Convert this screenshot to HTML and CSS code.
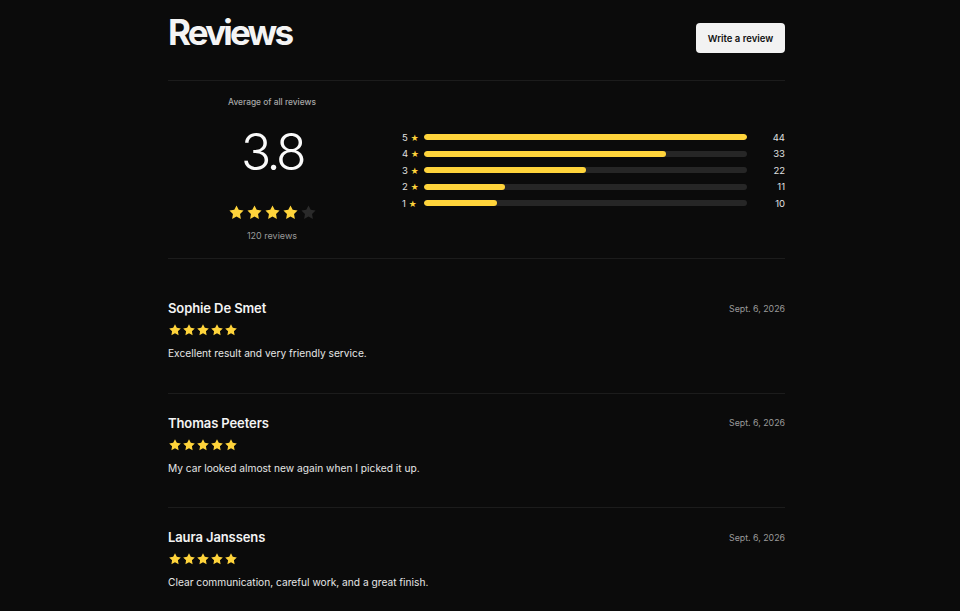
FILE: index.html
```html
<!DOCTYPE html>
<html lang="en">
<head>
<meta charset="utf-8">
<title>Reviews</title>
<link rel="stylesheet" href="styles.css">
</head>
<body>
<svg width="0" height="0" class="defs" aria-hidden="true">
  <defs>
    <path id="star" d="M12 2l3.09 6.26L22 9.27l-5 4.87 1.18 6.88L12 17.77l-6.18 3.25L7 14.14 2 9.27l6.91-1.01L12 2z"/>
  </defs>
</svg>
<main class="page">
  <header class="header">
    <h1 class="title">Reviews</h1>
    <button class="btn">Write a review</button>
  </header>

  <section class="summary">
    <div class="avg">
      <div class="avg-label">Average of all reviews</div>
      <div class="avg-value">3.8</div>
      <div class="stars stars-lg">
        <svg viewBox="0 0 24 24" class="on"><use href="#star"/></svg>
        <svg viewBox="0 0 24 24" class="on"><use href="#star"/></svg>
        <svg viewBox="0 0 24 24" class="on"><use href="#star"/></svg>
        <svg viewBox="0 0 24 24" class="on"><use href="#star"/></svg>
        <svg viewBox="0 0 24 24" class="off"><use href="#star"/></svg>
      </div>
      <div class="avg-count">120 reviews</div>
    </div>
    <div class="bars">
      <div class="bar-row"><span class="bar-label">5 <span class="mini">★</span></span><div class="track"><div class="fill" style="width:100%"></div></div><span class="bar-count">44</span></div>
      <div class="bar-row"><span class="bar-label">4 <span class="mini">★</span></span><div class="track"><div class="fill" style="width:75%"></div></div><span class="bar-count">33</span></div>
      <div class="bar-row"><span class="bar-label">3 <span class="mini">★</span></span><div class="track"><div class="fill" style="width:50%"></div></div><span class="bar-count">22</span></div>
      <div class="bar-row"><span class="bar-label">2 <span class="mini">★</span></span><div class="track"><div class="fill" style="width:25%"></div></div><span class="bar-count">11</span></div>
      <div class="bar-row"><span class="bar-label">1 <span class="mini">★</span></span><div class="track"><div class="fill" style="width:22.7%"></div></div><span class="bar-count">10</span></div>
    </div>
  </section>

  <section class="list">
    <article class="review">
      <div class="review-head">
        <h2 class="name">Sophie De Smet</h2>
        <span class="date">Sept. 6, 2026</span>
      </div>
      <div class="stars stars-sm">
        <svg viewBox="0 0 24 24" class="on"><use href="#star"/></svg>
        <svg viewBox="0 0 24 24" class="on"><use href="#star"/></svg>
        <svg viewBox="0 0 24 24" class="on"><use href="#star"/></svg>
        <svg viewBox="0 0 24 24" class="on"><use href="#star"/></svg>
        <svg viewBox="0 0 24 24" class="on"><use href="#star"/></svg>
      </div>
      <p class="text">Excellent result and very friendly service.</p>
    </article>
    <article class="review">
      <div class="review-head">
        <h2 class="name">Thomas Peeters</h2>
        <span class="date">Sept. 6, 2026</span>
      </div>
      <div class="stars stars-sm">
        <svg viewBox="0 0 24 24" class="on"><use href="#star"/></svg>
        <svg viewBox="0 0 24 24" class="on"><use href="#star"/></svg>
        <svg viewBox="0 0 24 24" class="on"><use href="#star"/></svg>
        <svg viewBox="0 0 24 24" class="on"><use href="#star"/></svg>
        <svg viewBox="0 0 24 24" class="on"><use href="#star"/></svg>
      </div>
      <p class="text">My car looked almost new again when I picked it up.</p>
    </article>
    <article class="review">
      <div class="review-head">
        <h2 class="name">Laura Janssens</h2>
        <span class="date">Sept. 6, 2026</span>
      </div>
      <div class="stars stars-sm">
        <svg viewBox="0 0 24 24" class="on"><use href="#star"/></svg>
        <svg viewBox="0 0 24 24" class="on"><use href="#star"/></svg>
        <svg viewBox="0 0 24 24" class="on"><use href="#star"/></svg>
        <svg viewBox="0 0 24 24" class="on"><use href="#star"/></svg>
        <svg viewBox="0 0 24 24" class="on"><use href="#star"/></svg>
      </div>
      <p class="text">Clear communication, careful work, and a great finish.</p>
    </article>
  </section>
</main>
</body>
</html>
```
FILE: styles.css
```css
* { box-sizing: border-box; }
html, body {
  margin: 0;
  padding: 0;
  background: #0b0b0b;
  color: #f2f2f2;
  font-family: Inter, "Noto Sans", "Liberation Sans", sans-serif;
}
.defs { position: absolute; width: 0; height: 0; }
.page {
  width: 617px;
  margin: 0 0 0 168px;
}
.header {
  display: flex;
  justify-content: space-between;
  align-items: flex-start;
  padding-top: 8px;
  border-bottom: 1px solid #1c1c1c;
  height: 81px;
}
.title {
  margin: 0;
  font-size: 35px;
  font-weight: 700;
  letter-spacing: -2.8px;
  line-height: 48px;
  color: #f4f4f4;
}
.btn {
  width: 89px;
  height: 30px;
  border: none;
  border-radius: 4px;
  background: #f2f2f2;
  color: #111;
  font-family: inherit;
  font-size: 9.5px;
  font-weight: 600;
  margin-top: 15px;
  padding: 0;
}
.summary {
  display: flex;
  align-items: center;
  gap: 26px;
  padding: 14px 0 15px;
  border-bottom: 1px solid #1c1c1c;
}
.avg {
  width: 208px;
  display: flex;
  flex-direction: column;
  align-items: center;
}
.avg-label {
  font-size: 8.4px;
  font-weight: 500;
  color: #a8a8a8;
  line-height: 14px;
}
.avg-value {
  font-size: 50px;
  font-weight: 300;
  letter-spacing: -3.5px;
  line-height: 64px;
  margin-top: 11px;
  color: #fafafa;
}
.stars { display: flex; }
.stars svg { display: block; }
.stars .on { fill: #ffd43b; }
.stars .off { fill: #2a2a2a; }
.stars-lg { gap: 1px; margin-top: 20px; }
.stars-lg svg { width: 17px; height: 17px; }
.avg-count {
  margin-top: 8px;
  font-size: 9px;
  color: #9a9a9a;
  line-height: 14px;
}
.bars {
  flex: 1;
  display: flex;
  flex-direction: column;
  gap: 4.5px;
  margin-top: 2px;
}
.bar-row {
  display: flex;
  align-items: center;
  height: 12px;
}
.bar-label {
  width: 22px;
  font-size: 9.5px;
  color: #e0e0e0;
  white-space: nowrap;
}
.mini { color: #ffd43b; font-size: 8px; }
.track {
  flex: 1;
  height: 6px;
  border-radius: 3px;
  background: #262626;
  overflow: hidden;
}
.fill {
  height: 100%;
  background: #ffd43b;
  border-radius: 3px;
}
.bar-count {
  width: 38px;
  text-align: right;
  font-size: 9.5px;
  color: #e0e0e0;
}
.list { margin-top: 20px; }
.review {
  padding: 19px 0 31.5px;
  border-bottom: 1px solid #1c1c1c;
}
.review:last-child { border-bottom: none; }
.review-head {
  display: flex;
  justify-content: space-between;
  align-items: center;
  height: 20px;
}
.name {
  margin: 0;
  font-size: 13px;
  font-weight: 600;
  letter-spacing: -0.1px;
  color: #f4f4f4;
}
.date {
  font-size: 8.8px;
  color: #9a9a9a;
}
.stars-sm { margin-top: 5px; }
.stars-sm svg { width: 14px; height: 14px; }
.text {
  margin: 8px 0 0;
  font-size: 10.2px;
  line-height: 16px;
  color: #e6e6e6;
}
```
